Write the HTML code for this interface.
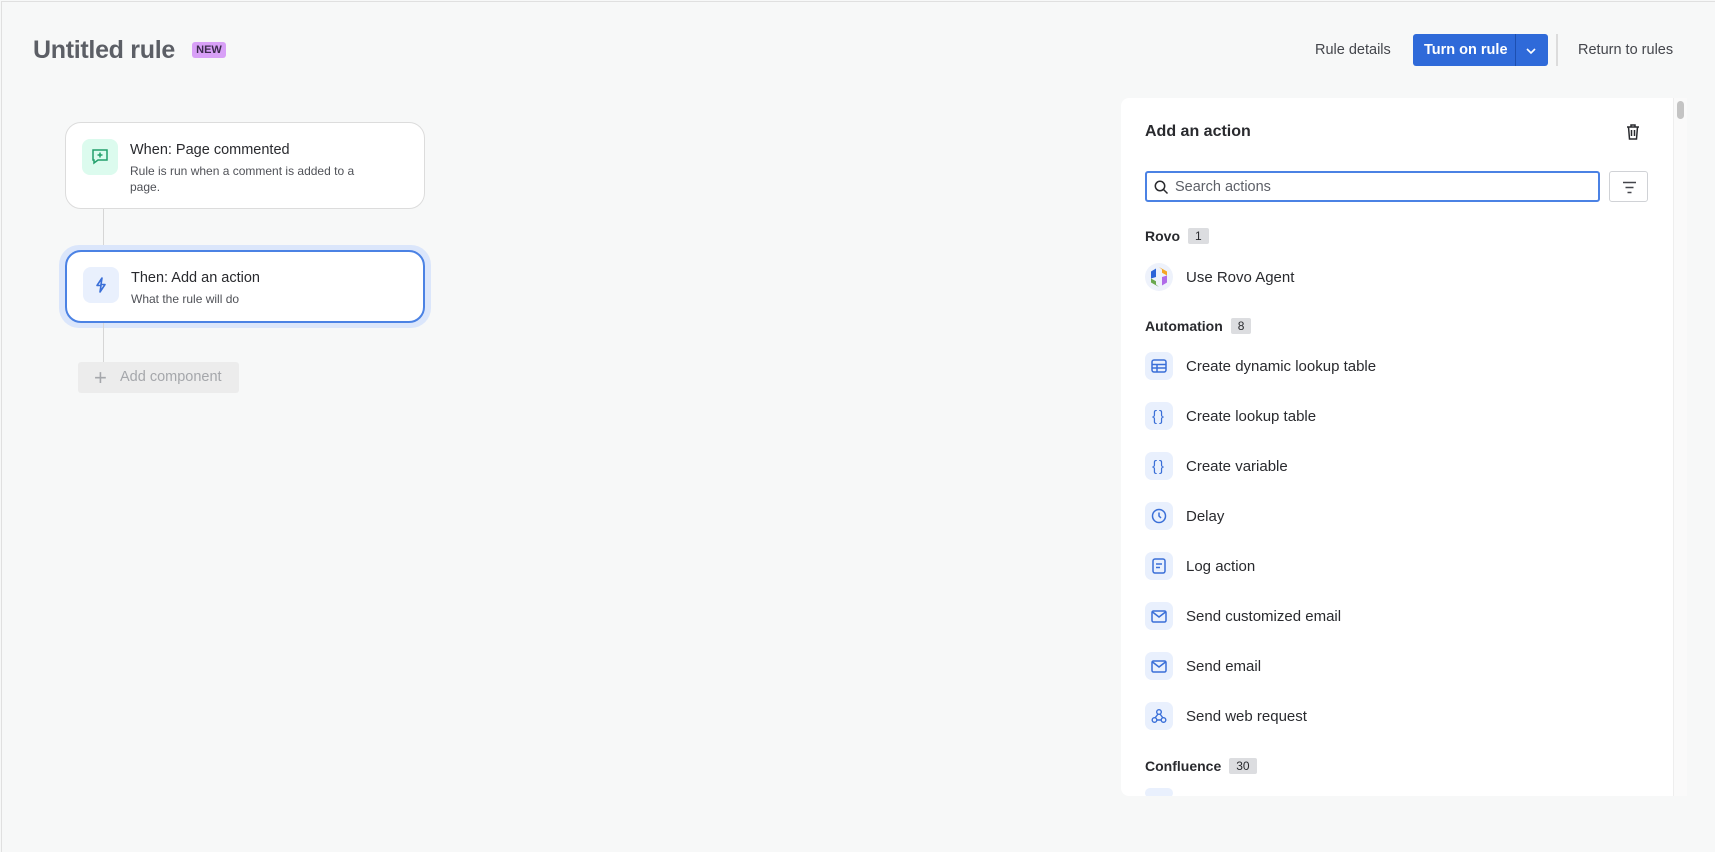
<!DOCTYPE html>
<html><head><meta charset="utf-8"><style>
*{box-sizing:border-box;margin:0;padding:0}
body{width:1715px;height:852px;background:#f7f8f8;font-family:"Liberation Sans",sans-serif;color:#292a2e;position:relative;overflow:hidden}
.abs{position:absolute}
.frame{left:1px;top:1px;right:0;bottom:0;border-left:1px solid #e0e0e0;border-top:1px solid #e0e0e0}
.title{left:33px;top:36px;font-size:25px;font-weight:bold;color:#5c5f66;letter-spacing:-0.3px}
.new{left:192px;top:42px;width:34px;height:16px;background:#d8a0f7;border-radius:3px;font-size:11px;font-weight:bold;color:#3c2b4d;text-align:center;line-height:16px}
.card{left:65px;width:360px;background:#fff;border:1px solid #dcdcdc;border-radius:16px}
.ib{position:absolute;left:16px;width:36px;height:36px;border-radius:8px;display:flex;align-items:center;justify-content:center}
.ct{position:absolute;left:64px;font-size:14.5px;color:#292a2e}
.cd{position:absolute;left:64px;font-size:12px;color:#505258;line-height:16px;width:245px}
.vline{left:103px;width:1px;background:#d6d6d6}
.addc{left:78px;top:362px;width:161px;height:31px;background:#ececec;border-radius:3px;color:#a5a7ab;font-size:14.5px;line-height:31px;padding-left:42px}
.hdr{top:41px;font-size:14.5px;color:#44464c}
.btn{left:1413px;top:34px;width:135px;height:32px;background:#2f6ad9;border-radius:3px}
.panel{left:1121px;top:98px;width:552px;height:698px;background:#fff;border-radius:8px 0 0 8px;overflow:hidden}
.sec{position:absolute;left:24px;font-size:14px;font-weight:bold;color:#292a2e}
.badge{display:inline-block;margin-left:8px;background:#dcdde0;font-weight:normal;font-size:12px;padding:0 7px;border-radius:2px;line-height:16px;vertical-align:1px}
.it{position:absolute;left:24px;height:28px;display:flex;align-items:center;font-size:15px;color:#292a2e}
.ic{width:28px;height:28px;border-radius:7px;background:#e9f0fd;display:flex;align-items:center;justify-content:center;margin-right:13px}
</style></head><body>
<div class="abs frame"></div>
<div class="abs title">Untitled rule</div>
<div class="abs new">NEW</div>

<div class="abs card" style="top:122px;height:87px">
 <div class="ib" style="top:16px;background:#dcfbee"><svg width="18" height="18" viewBox="0 0 18 18" fill="none" stroke="#22a06b" stroke-width="1.5"><path d="M2 2h14v10H7l-4 3v-3H2z"/><path d="M9 4.5v5M6.5 7h5"/></svg></div>
 <div class="ct" style="top:19px">When: Page commented</div>
 <div class="cd" style="top:40px">Rule is run when a comment is added to a page.</div>
</div>
<div class="abs vline" style="top:209px;height:41px"></div>
<div class="abs" style="left:59px;top:245px;width:372px;height:83px;border-radius:20px;background:#dbe6fb"></div>
<div class="abs card" style="top:250px;height:73px;border:2px solid #4b82e4">
 <div class="ib" style="top:15px;background:#e9f0fd"><svg width="18" height="18" viewBox="0 0 18 18" fill="none" stroke="#3a6fd8" stroke-width="1.6" stroke-linejoin="round"><path d="M10 2L5 9.5h4L8 16l5-7.5H9z"/></svg></div>
 <div class="ct" style="top:18px">Then: Add an action</div>
 <div class="cd" style="top:39px">What the rule will do</div>
</div>
<div class="abs vline" style="top:323px;height:39px"></div>
<div class="abs addc"><span style="position:absolute;left:16px;top:0;font-size:22px;font-weight:300;color:#a5a7ab">+</span>Add component</div>

<div class="abs hdr" style="left:1315px;top:42px">Rule details</div>
<div class="abs btn"><span style="position:absolute;left:11px;top:8px;color:#fff;font-size:14.5px;font-weight:bold">Turn on rule</span><div style="position:absolute;left:102px;top:0;width:1px;height:32px;background:#1d4fb0"></div><svg style="position:absolute;left:112px;top:13px" width="12" height="8" viewBox="0 0 12 8" fill="none" stroke="#fff" stroke-width="1.6"><path d="M2 2l4 4 4-4"/></svg></div>
<div class="abs" style="left:1556px;top:34px;width:2px;height:32px;background:#dcdcdc"></div>
<div class="abs hdr" style="left:1578px;top:42px">Return to rules</div>

<div class="abs panel">
 <div style="position:absolute;left:24px;top:25px;font-size:16px;font-weight:bold">Add an action</div>
 <svg style="position:absolute;left:504px;top:25px" width="16" height="18" viewBox="0 0 16 18" fill="none" stroke="#292a2e" stroke-width="1.5"><path d="M2 4h12M6 4V2h4v2M3.5 4l1 12h7l1-12M6.5 7v6M9.5 7v6"/></svg>
 <div style="position:absolute;left:24px;top:73px;width:455px;height:31px;border:2px solid #4b82e4;border-radius:3px">
  <svg style="position:absolute;left:7px;top:7px" width="15" height="15" viewBox="0 0 15 15" fill="none" stroke="#292a2e" stroke-width="1.5"><circle cx="6" cy="6" r="4.7"/><path d="M9.5 9.5l4 4"/></svg>
  <span style="position:absolute;left:28px;top:6px;font-size:14.5px;color:#5d6068">Search actions</span>
 </div>
 <div style="position:absolute;left:488px;top:73px;width:39px;height:31px;border:1px solid #d0d2d6;border-radius:3px">
  <svg style="position:absolute;left:12px;top:9px" width="15" height="13" viewBox="0 0 15 13" stroke="#44464c" stroke-width="1.5"><path d="M1 1.5h13M3.5 6.5h8M5.5 11.5h4"/></svg>
 </div>
 <div class="sec" style="top:130px">Rovo<span class="badge">1</span></div>
 <div class="it" style="top:165px"><div class="ic" style="background:#eef2fb;border-radius:50%"><svg width="20" height="22" viewBox="0 0 20 22"><path d="M10 1l8 4.5v4l-5-2.8V3.5z" fill="#f5a623"/><path d="M18 9.5v7l-5 3V11z" fill="#b06be8"/><path d="M10 21l-8-4.5v-4l5 2.8v3.2z" fill="#6aa84f"/><path d="M2 12.5v-7l5-3V11z" fill="#2c64d8"/></svg></div>Use Rovo Agent</div>
 <div class="sec" style="top:220px">Automation<span class="badge">8</span></div>
 <div class="it" style="top:254px"><div class="ic"><svg width="16" height="14" viewBox="0 0 16 14" fill="none" stroke="#3a6fd8" stroke-width="1.5"><rect x="1" y="1" width="14" height="12" rx="2"/><path d="M1 5.5h14M1 9h14M6 5.5V13"/></svg></div>Create dynamic lookup table</div>
 <div class="it" style="top:304px"><div class="ic"><span style="color:#3a6fd8;font-size:15px;letter-spacing:2px">{}</span></div>Create lookup table</div>
 <div class="it" style="top:354px"><div class="ic"><span style="color:#3a6fd8;font-size:15px;letter-spacing:2px">{}</span></div>Create variable</div>
 <div class="it" style="top:404px"><div class="ic"><svg width="16" height="16" viewBox="0 0 16 16" fill="none" stroke="#3a6fd8" stroke-width="1.5"><circle cx="8" cy="8" r="6.5"/><path d="M8 4.5V8l2 2"/></svg></div>Delay</div>
 <div class="it" style="top:454px"><div class="ic"><svg width="14" height="16" viewBox="0 0 14 16" fill="none" stroke="#3a6fd8" stroke-width="1.5"><rect x="1" y="1" width="12" height="14" rx="2"/><path d="M4 6h6M4 9.5h4"/></svg></div>Log action</div>
 <div class="it" style="top:504px"><div class="ic"><svg width="16" height="13" viewBox="0 0 16 13" fill="none" stroke="#3a6fd8" stroke-width="1.5"><rect x="1" y="1" width="14" height="11" rx="1.5"/><path d="M1.5 2l6.5 5 6.5-5"/></svg></div>Send customized email</div>
 <div class="it" style="top:554px"><div class="ic"><svg width="16" height="13" viewBox="0 0 16 13" fill="none" stroke="#3a6fd8" stroke-width="1.5"><rect x="1" y="1" width="14" height="11" rx="1.5"/><path d="M1.5 2l6.5 5 6.5-5"/></svg></div>Send email</div>
 <div class="it" style="top:604px"><div class="ic"><svg width="16" height="16" viewBox="0 0 16 16" fill="none" stroke="#3a6fd8" stroke-width="1.4"><circle cx="8" cy="4" r="2.3"/><circle cx="3.5" cy="12" r="2.3"/><circle cx="12.5" cy="12" r="2.3"/><path d="M7 6l-3 4M9 6l3 4M5.8 12h4.4"/></svg></div>Send web request</div>
 <div class="sec" style="top:660px">Confluence<span class="badge">30</span></div>
 <div style="position:absolute;left:24px;top:690px;width:28px;height:10px;background:#e9f0fd;border-radius:7px"></div>
</div>
<div class="abs" style="left:1673px;top:98px;width:14px;height:698px;background:#fafafa;border-left:1px solid #eee"></div>
<div class="abs" style="left:1677px;top:101px;width:7px;height:18px;background:#c4c4c4;border-radius:4px"></div>
</body></html>
